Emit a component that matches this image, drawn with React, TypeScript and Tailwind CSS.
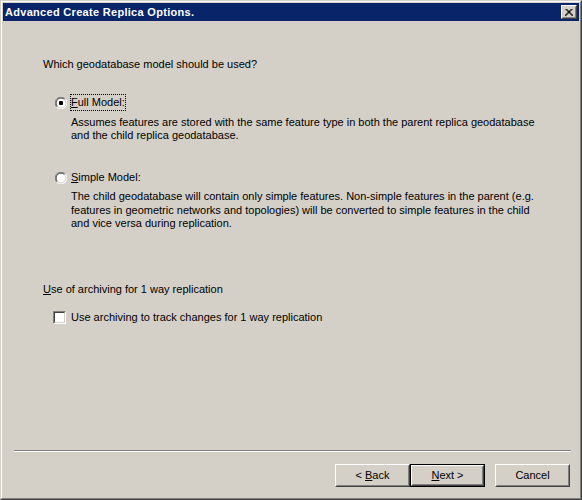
import React from "react";

const font = { fontFamily: '"Liberation Sans", Arial, sans-serif' };

function Radio({ checked }: { checked?: boolean }) {
  return (
    <svg width="12" height="12" viewBox="0 0 12 12" className="block shrink-0">
      <circle cx="6" cy="6" r="5.5" fill="#ffffff" />
      <path d="M10.2 1.8 A5.5 5.5 0 0 0 1.8 10.2" fill="none" stroke="#808080" strokeWidth="1" />
      <path d="M9.5 2.5 A4.5 4.5 0 0 0 2.5 9.5" fill="none" stroke="#404040" strokeWidth="1" />
      <path d="M1.8 10.2 A5.5 5.5 0 0 0 10.2 1.8" fill="none" stroke="#ffffff" strokeWidth="1" />
      <path d="M2.5 9.5 A4.5 4.5 0 0 0 9.5 2.5" fill="none" stroke="#d4d0c8" strokeWidth="1" />
      {checked && <rect x="4" y="4" width="4" height="4" rx="1" fill="#000000" />}
    </svg>
  );
}

function Button({ children, def }: { children: React.ReactNode; def?: boolean }) {
  const inner = (
    <div className="h-full w-full border border-t-white border-l-white border-r-[#404040] border-b-[#404040] bg-[#d4d0c8]">
      <div className="flex h-full w-full items-center justify-center border border-t-[#d4d0c8] border-l-[#d4d0c8] border-r-[#808080] border-b-[#808080] text-[11px] text-black">
        {children}
      </div>
    </div>
  );
  return def ? (
    <div className="h-[23px] w-[75px] border border-black">{inner}</div>
  ) : (
    <div className="h-[23px] w-[75px]">{inner}</div>
  );
}

export default function App() {
  return (
    <div style={font} className="h-[500px] w-[582px] text-[11px] leading-[13px] text-black">
      <div className="h-full w-full border border-t-[#d4d0c8] border-l-[#d4d0c8] border-r-[#404040] border-b-[#404040]">
        <div className="flex h-full w-full flex-col border border-t-white border-l-white border-r-[#808080] border-b-[#808080] bg-[#d4d0c8] p-px">
          {/* title bar */}
          <div className="flex h-[18px] items-center justify-between bg-[#0a246a] pl-[2px] pr-[2px]">
            <span className="text-[11px] font-bold tracking-[0.3px] text-white">Advanced Create Replica Options.</span>
            <div className="h-[14px] w-[16px] border border-t-white border-l-white border-r-[#404040] border-b-[#404040] bg-[#d4d0c8]">
              <div className="flex h-full w-full items-center justify-center border border-t-[#d4d0c8] border-l-[#d4d0c8] border-r-[#808080] border-b-[#808080]">
                <svg width="8" height="7" viewBox="0 0 8 7">
                  <path d="M0.5 0 L7.5 7 M1.5 0 L8.5 7 M7.5 0 L0.5 7 M6.5 0 L-0.5 7" stroke="#000" strokeWidth="1" />
                </svg>
              </div>
            </div>
          </div>
          {/* body */}
          <div className="flex flex-1 flex-col pl-[40px]">
            <div className="mt-[37px]">Which geodatabase model should be used?</div>

            <div className="mt-[23px] flex items-center pl-[12px]">
              <Radio checked />
              <span className="ml-[3px] border border-dotted border-black px-0 py-px">
                <u>F</u>ull Model:
              </span>
            </div>
            <div className="mt-[5px] pl-[28px]">
              <div>Assumes features are stored with the same feature type in both the parent replica geodatabase</div>
              <div>and the child replica geodatabase.</div>
            </div>

            <div className="mt-[27px] flex items-center pl-[12px]">
              <Radio />
              <span className="ml-[4px] py-[2px]">
                <u>S</u>imple Model:
              </span>
            </div>
            <div className="mt-[4px] pl-[28px] leading-[13.5px]">
              <div>The child geodatabase will contain only simple features. Non-simple features in the parent (e.g.</div>
              <div>features in geometric networks and topologies) will be converted to simple features in the child</div>
              <div>and vice versa during replication.</div>
            </div>

            <div className="mt-[52px]">
              <u>U</u>se of archiving for 1 way replication
            </div>
            <div className="mt-[15px] flex items-center pl-[10px]">
              <div className="h-[13px] w-[13px] border border-t-[#808080] border-l-[#808080] border-r-white border-b-white">
                <div className="h-full w-full border border-t-[#404040] border-l-[#404040] border-r-[#d4d0c8] border-b-[#d4d0c8] bg-white" />
              </div>
              <span className="ml-[5px]">Use archiving to track changes for 1 way replication</span>
            </div>

            <div className="flex-1" />
          </div>
          {/* separator */}
          <div className="mx-[11px] mr-[8px] h-[2px] border-t border-b border-t-[#808080] border-b-white" />
          <div className="flex justify-end pr-[9px] pt-[12px] pb-[10px]">
            <Button>
              <span>&lt; <u>B</u>ack</span>
            </Button>
            <Button def>
              <span>
                <u>N</u>ext &gt;
              </span>
            </Button>
            <div className="w-[10px]" />
            <Button>Cancel</Button>
          </div>
        </div>
      </div>
    </div>
  );
}
